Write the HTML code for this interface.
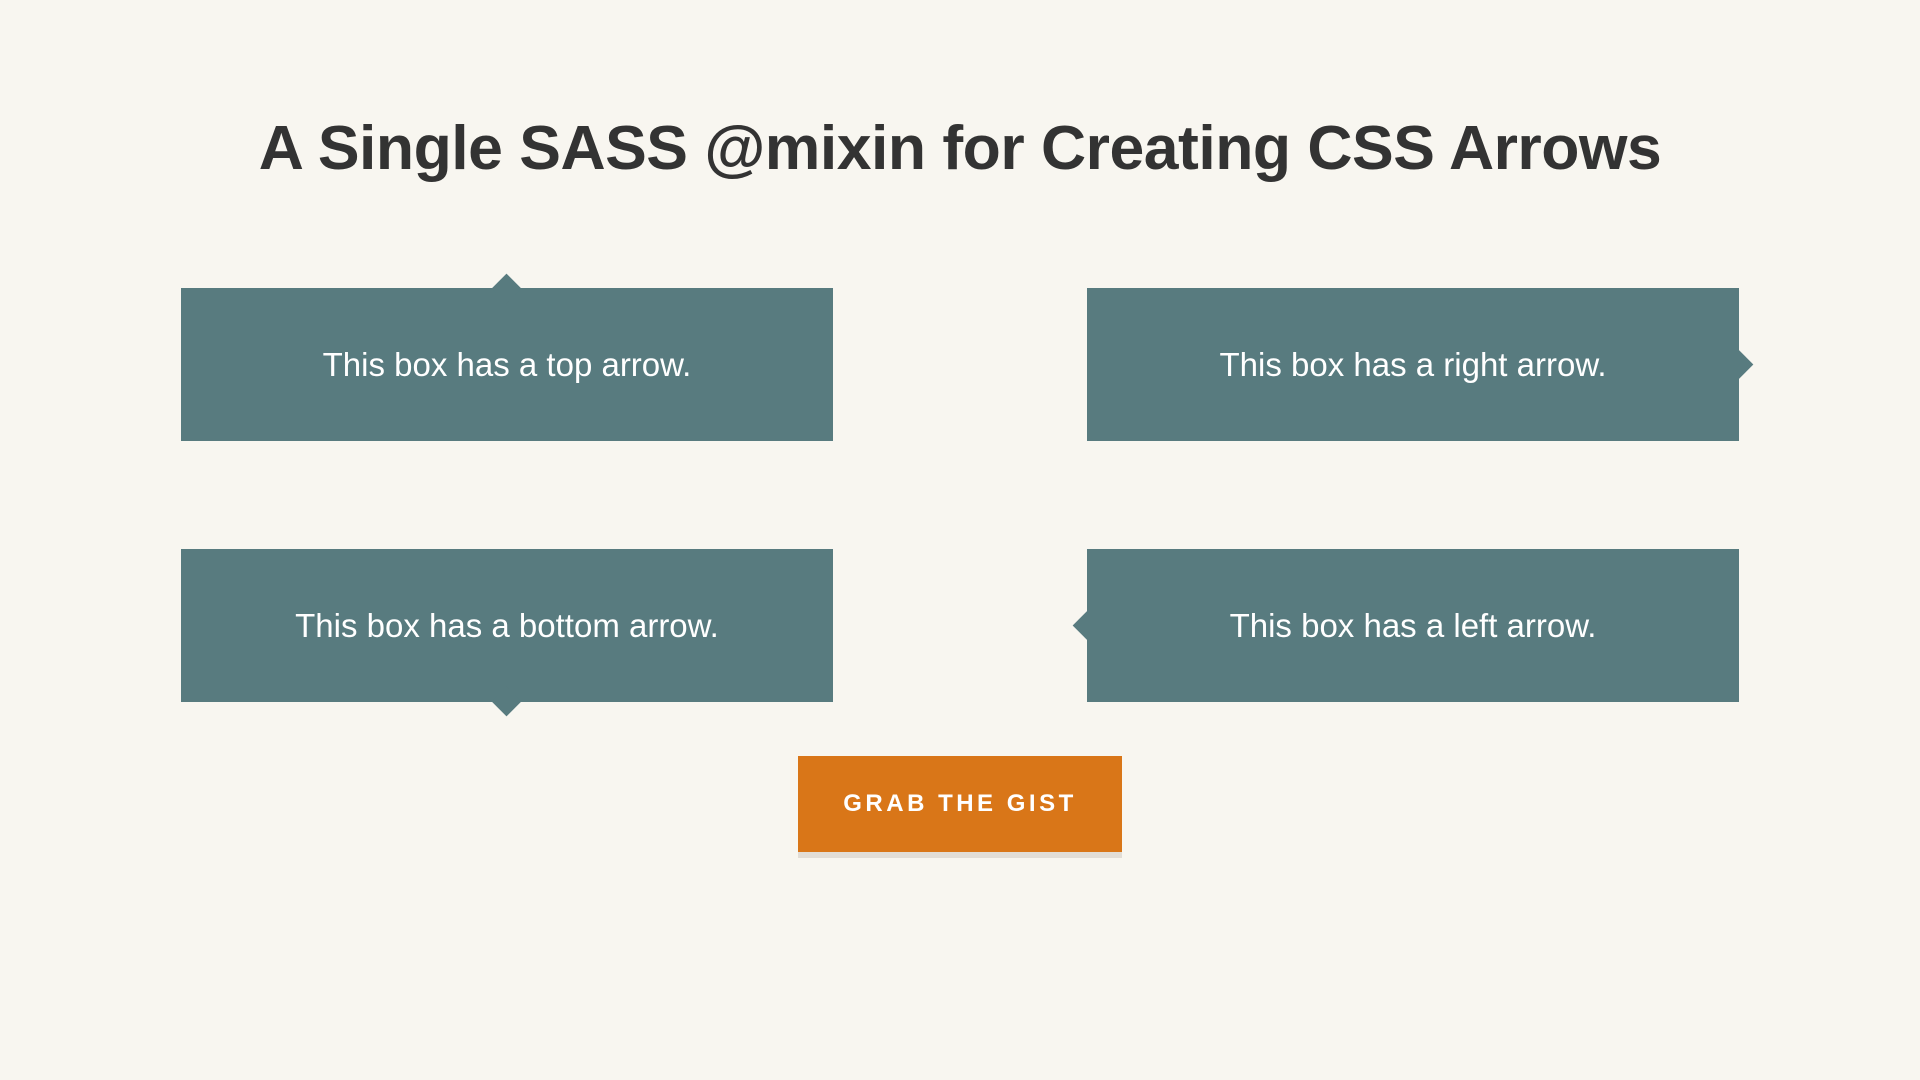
<!DOCTYPE html>
<html><head><meta charset="utf-8"><style>
html,body{margin:0;padding:0;}
body{width:1920px;height:1080px;background:#f8f6f0;position:relative;font-family:"Liberation Sans",sans-serif;overflow:hidden;}
h1{position:absolute;left:0;width:1920px;top:106px;margin:0;text-align:center;font-size:62.5px;font-weight:bold;color:#333;letter-spacing:-0.5px;line-height:84px;}
.box{position:absolute;width:652px;height:153px;background:#587b7f;color:#fff;font-size:33px;display:flex;align-items:center;justify-content:center;}
.box:after{content:"";position:absolute;width:21px;height:21px;background:#587b7f;transform:rotate(45deg);}
.t:after{top:-10px;left:315px;}
.b:after{bottom:-10px;left:315px;}
.r:after{right:-10px;top:66px;}
.l:after{left:-10px;top:66px;}
.btn{position:absolute;left:798px;top:756px;width:324px;height:96px;background:#d97618;color:#fff;font-weight:bold;font-size:24px;letter-spacing:3.5px;display:flex;align-items:center;justify-content:center;box-shadow:0 6px 0 #e2ddd6;}
</style></head><body>
<h1>A Single SASS @mixin for Creating CSS Arrows</h1>
<div class="box t" style="left:181px;top:288px">This box has a top arrow.</div>
<div class="box r" style="left:1087px;top:288px">This box has a right arrow.</div>
<div class="box b" style="left:181px;top:549px">This box has a bottom arrow.</div>
<div class="box l" style="left:1087px;top:549px">This box has a left arrow.</div>
<div class="btn">GRAB THE GIST</div>
</body></html>
